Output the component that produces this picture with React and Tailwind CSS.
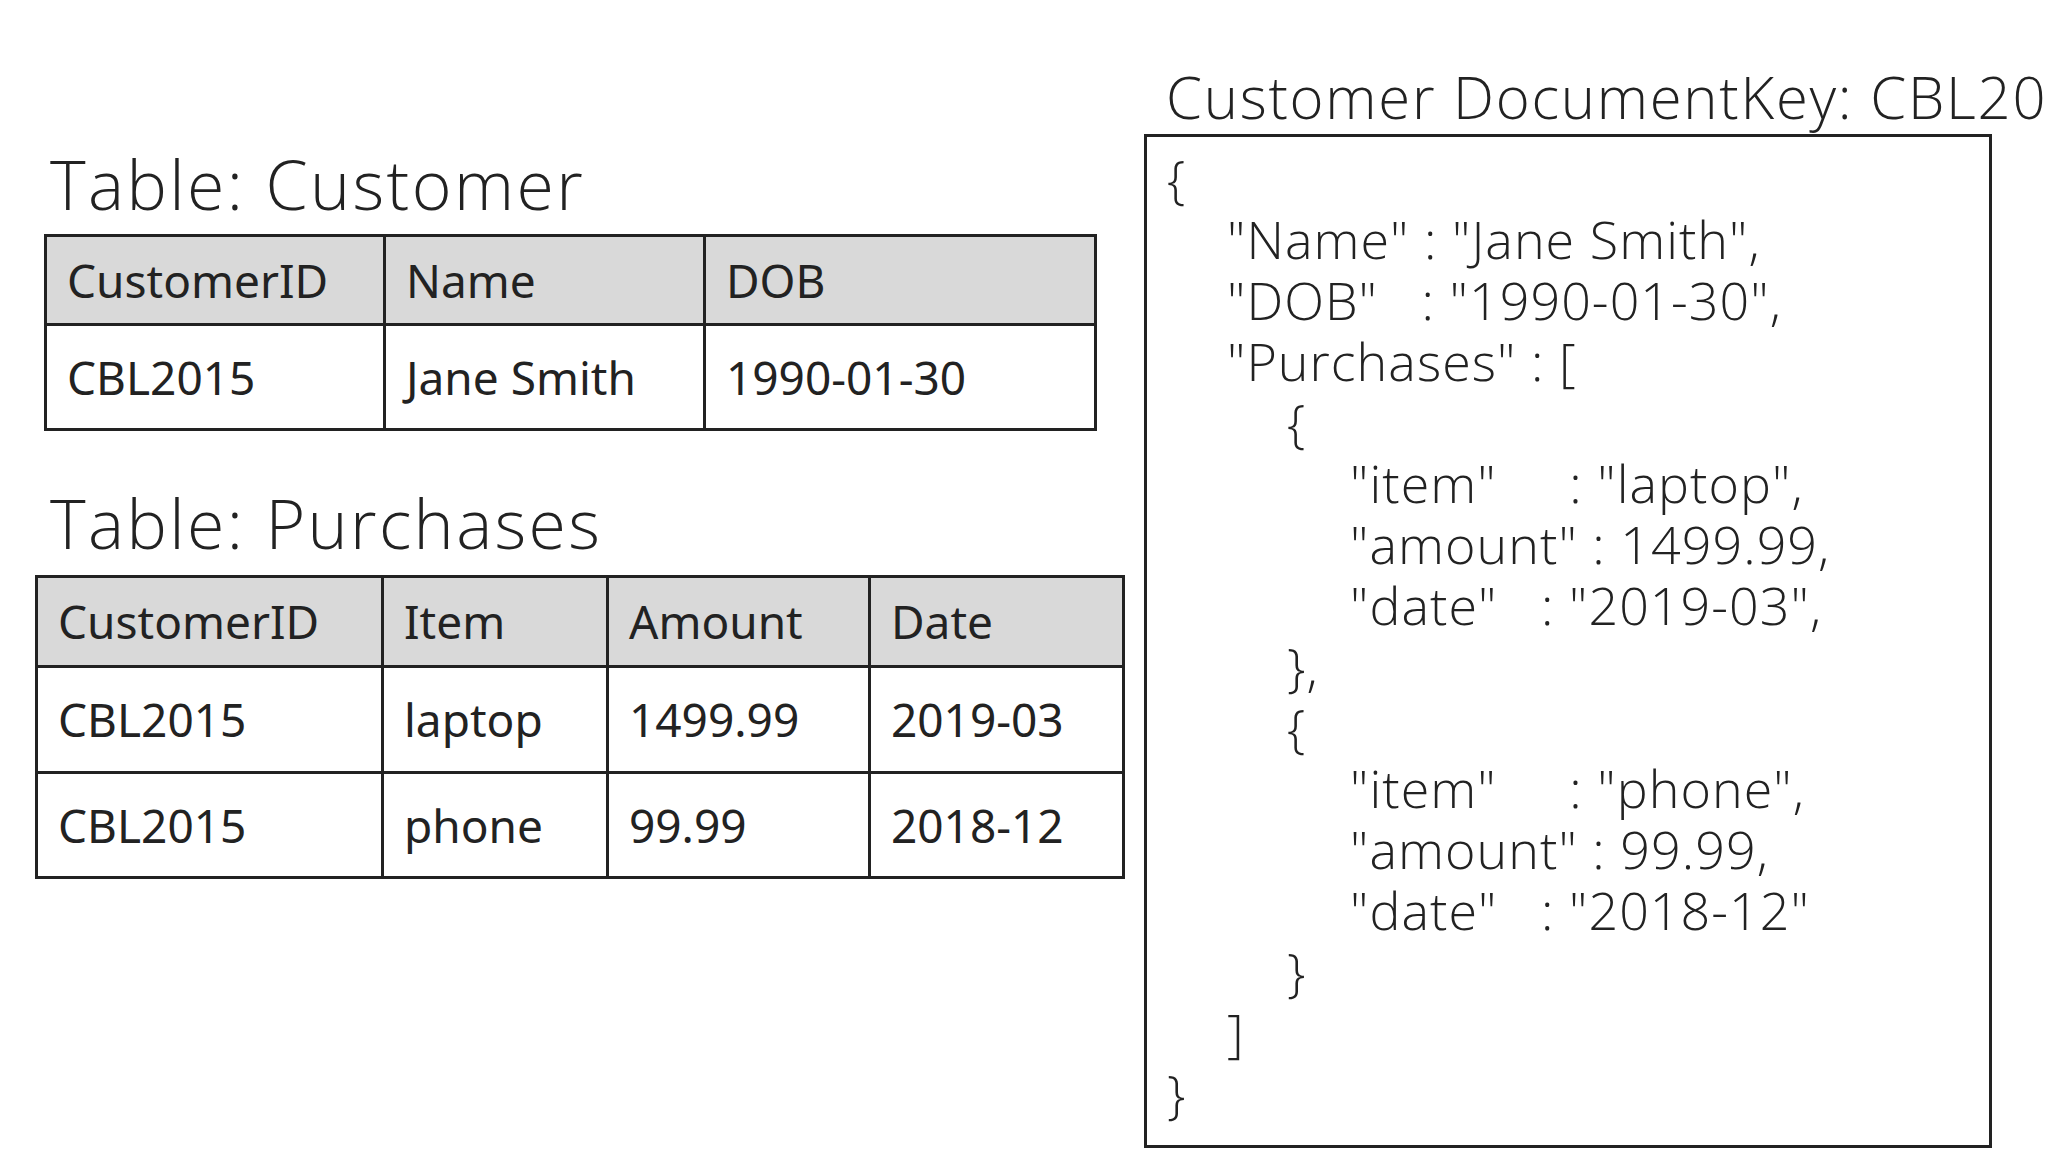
export default function App() {
  const cell = "border-[3px] border-[#222] px-[20px] text-left font-normal align-middle overflow-hidden whitespace-nowrap";
  const json = [
    [0, "{"],
    [1, '"Name" : "Jane Smith",'],
    [1, '"DOB"   : "1990-01-30",'],
    [1, '"Purchases" : ['],
    [2, "{"],
    [3, '"item"     : "laptop",'],
    [3, '"amount" : 1499.99,'],
    [3, '"date"   : "2019-03",'],
    [2, "},"],
    [2, "{"],
    [3, '"item"     : "phone",'],
    [3, '"amount" : 99.99,'],
    [3, '"date"   : "2018-12"'],
    [2, "}"],
    [1, "]"],
    [0, "}"],
  ];
  const ind = ["pl-0", "pl-[60px]", "pl-[120px]", "pl-[183px]"];
  return (
    <div className="relative w-[2048px] h-[1152px] overflow-hidden bg-white flex text-[#222]">
      <div className="w-[1144px] shrink-0 flex flex-col">
        <div className="mt-[150px] ml-[50px] text-[68px] tracking-[0.035em] leading-none font-light" style={{ fontFamily: '"Open Sans", sans-serif' }}>Table: Customer</div>
        <table className="mt-[16px] ml-[44px] w-[1050px] table-fixed border-collapse text-[46px]" style={{ fontFamily: '"Noto Sans", sans-serif' }}>
          <colgroup>
            <col className="w-[339px]" />
            <col className="w-[320px]" />
            <col className="w-[391px]" />
          </colgroup>
          <thead>
            <tr className="bg-[#d9d9d9] h-[89px]">
              <th className={cell}>CustomerID</th>
              <th className={cell}>Name</th>
              <th className={cell}>DOB</th>
            </tr>
          </thead>
          <tbody>
            <tr className="h-[105px]">
              <td className={cell}>CBL2015</td>
              <td className={cell}>Jane Smith</td>
              <td className={cell}>1990-01-30</td>
            </tr>
          </tbody>
        </table>
        <div className="mt-[58px] ml-[50px] text-[68px] tracking-[0.035em] leading-none font-light" style={{ fontFamily: '"Open Sans", sans-serif' }}>Table: Purchases</div>
        <table className="mt-[18px] ml-[35px] w-[1087px] table-fixed border-collapse text-[46px]" style={{ fontFamily: '"Noto Sans", sans-serif' }}>
          <colgroup>
            <col className="w-[346px]" />
            <col className="w-[225px]" />
            <col className="w-[262px]" />
            <col className="w-[254px]" />
          </colgroup>
          <thead>
            <tr className="bg-[#d9d9d9] h-[90px]">
              <th className={cell}>CustomerID</th>
              <th className={cell}>Item</th>
              <th className={cell}>Amount</th>
              <th className={cell}>Date</th>
            </tr>
          </thead>
          <tbody>
            <tr className="h-[106px]">
              <td className={cell}>CBL2015</td>
              <td className={cell}>laptop</td>
              <td className={cell}>1499.99</td>
              <td className={cell}>2019-03</td>
            </tr>
            <tr className="h-[105px]">
              <td className={cell}>CBL2015</td>
              <td className={cell}>phone</td>
              <td className={cell}>99.99</td>
              <td className={cell}>2018-12</td>
            </tr>
          </tbody>
        </table>
      </div>
      <div className="flex flex-col shrink-0" style={{ fontFamily: '"Open Sans", sans-serif' }}>
        <div className="mt-[68px] ml-[22px] text-[58px] tracking-[0.03em] leading-none font-light whitespace-nowrap">Customer DocumentKey: CBL2015</div>
        <div className="mt-[8px] w-[848px] h-[1014px] border-[3px] border-[#222] pt-[10px] pl-[20px] text-[52px] tracking-[0.02em] font-light">
          {json.map(([l, t], i) => (
            <div key={i} className={"h-[61px] leading-[61px] whitespace-pre " + ind[l]}>{t}</div>
          ))}
        </div>
      </div>
    </div>
  );
}
